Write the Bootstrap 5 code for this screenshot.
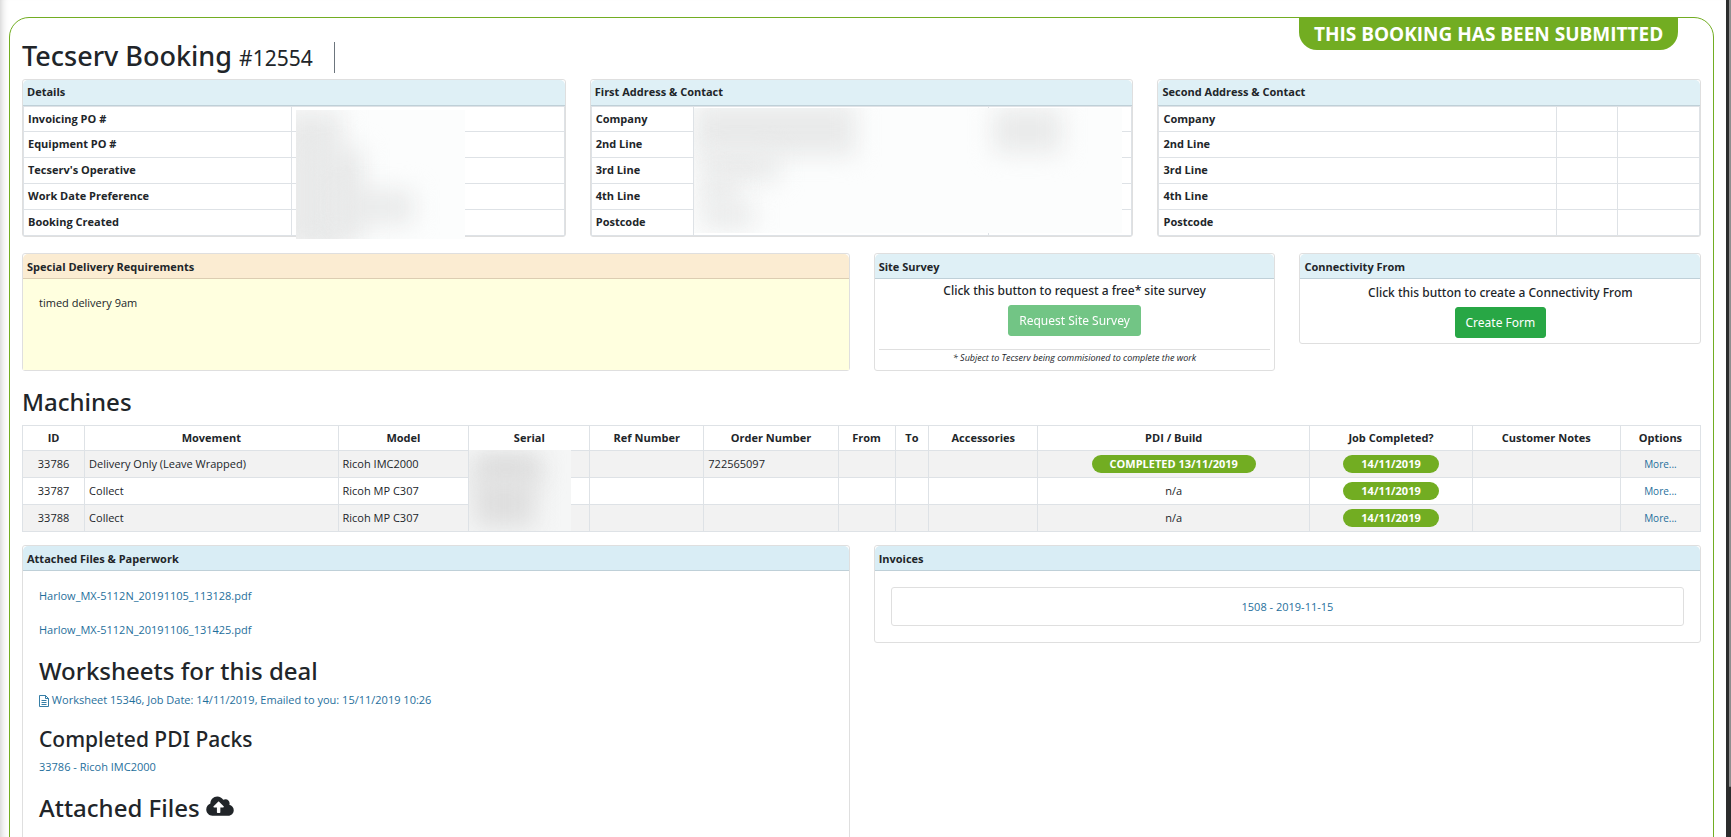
<!DOCTYPE html>
<html lang="en">
<head>
<meta charset="utf-8">
<meta name="viewport" content="width=device-width, initial-scale=1">
<title>Tecserv Booking #12554</title>
<link rel="stylesheet" href="https://cdn.jsdelivr.net/npm/bootstrap@5.3.0/dist/css/bootstrap.min.css">
<style>
  html { overflow: hidden; }
  body { font-family: "Open Sans", "Noto Sans", sans-serif; font-size: 11px; line-height: 17px; color: #212529; height: 100vh; overflow: hidden; box-shadow: inset 8px 0 8px -8px #bbb; }
  a { color: #1f6f9c; text-decoration: none; }
  .page-area { height: 100vh; min-width: 0; overflow: hidden; padding: 17px 12px 0 9px; }
  .booking-frame { border: 1px solid #72ad22; border-radius: 20px 20px 0 0; min-height: 120vh; padding: 0 12px; }
  .side-rail { width: 5px; background: #2b2c2c; }
  .side-thumb { width: 2px; height: 94vh; background: #8e8e8e; border-radius: 0 0 2px 2px; }
  .status-tab { background: #72ad22; color: #fff; font-size: 19px; font-weight: 700; line-height: 32px; padding: 0 15px; border-radius: 0 0 18px 18px; margin-right: 23px; }
  .title-row { height: 61px; }
  h1, h2, h3, .ask, .btn { font-family: "Noto Sans", "Open Sans", sans-serif; }
  h1 { font-size: 27px; line-height: 34px; font-weight: 500; margin: 21px 0 0; }
  h1 small { font-size: 21px; font-weight: 400; }
  .title-rule { width: 1px; height: 31px; background: #6c757d; margin: 24px 0 0 21px; }
  h2 { font-size: 24px; line-height: 30px; font-weight: 500; margin: 0; }
  h3 { font-size: 21px; line-height: 27px; font-weight: 500; margin: 0; }
  .card { border-color: #dfdfdf; border-radius: 3px; }
  .card-header { background: #dff0f6; border-color: #bfd0d8; font-size: 11px; font-weight: 700; line-height: 17px; padding: 4px 4px 3px; border-radius: 2px 2px 0 0; }
  .addresses .card-header { padding: 3px 4px 5px; }
  .lower { margin-top: 13px; }
  .lower .card-header { background: #d9edf5; }
  .table { font-size: 11px; margin: 0; color: #212529; border-color: #dee2e6; --bs-table-striped-bg: #f2f2f2; }
  .table > :not(caption) > * > * { padding: 4px; line-height: 17px; }
  .table > thead > tr > th { padding: 3px 4px 4px; }
  .info-table { border: 1px solid #dee2e6; table-layout: fixed; }
  .table.info-table > tbody > tr > * { padding: 3px 4px 5px; }
  .table.info-table > tbody > tr:first-child > * { padding-bottom: 4px; }
  .info-table th { font-weight: 700; }
  .notes { background: #ffffdf; padding: 15px 16px; }
  .notes-card .card-header { background: #fbecd2; border-color: #dccdb2; }
  .ask { font-size: 12px; line-height: 20px; font-weight: 500; margin-bottom: 4px; }
  .survey-body { padding: 2px 4px 4px; }
  .form-body { padding: 4px 4px 5px; }
  .btn { font-size: 12px; line-height: 21px; padding: 4px 10px; border-radius: 3px; }
  .btn-success { background: #28a745; border-color: #28a745; }
  .btn-success:disabled { background: #28a745; border-color: #28a745; opacity: .65; }
  .fine-print { font-size: 9px; line-height: 16px; font-style: italic; border-top: 1px solid #dfdfdf; margin-top: 13px; }
  .machines { table-layout: fixed; }
  .machines .pill { display: inline-block; background: #72ad22; color: #fff; font-weight: 700; line-height: 18px; border-radius: 9px; padding: 0 18px; }
  .machines tbody a { font-size: 10px; }
  .redacted { position: absolute; overflow: hidden; background: #fcfdfd; }
  .redacted i { position: absolute; background: #e9eaea; filter: blur(12px); }
  .files { padding: 16px; }
  .file-line { margin-bottom: 17px; }
  .files h2, .files h3 { padding-top: 1px; margin-bottom: 5px; }
  .files h2 svg { vertical-align: baseline; }
  .invoice-link { border: 1px solid #dfdfdf; border-radius: 3px; line-height: 17px; padding: 10px; }
</style>
</head>
<body class="d-flex">
<main class="page-area flex-grow-1">
<div class="booking-frame">
  <header class="title-row d-flex align-items-start">
    <h1>Tecserv Booking <small>#12554</small></h1>
    <div class="title-rule"></div>
    <div class="status-tab ms-auto">THIS BOOKING HAS BEEN SUBMITTED</div>
  </header>

  <div class="row addresses">
    <section class="col-4">
      <div class="card">
        <div class="card-header">Details</div>
        <table class="table table-bordered info-table">
          <colgroup><col style="width:49.6%"><col></colgroup>
          <tbody>
            <tr><th scope="row">Invoicing PO #</th><td></td></tr>
            <tr><th scope="row">Equipment PO #</th><td></td></tr>
            <tr><th scope="row">Tecserv's Operative</th><td></td></tr>
            <tr><th scope="row">Work Date Preference</th><td></td></tr>
            <tr><th scope="row">Booking Created</th><td></td></tr>
          </tbody>
        </table>
        <div class="redacted" style="left:50.4%;top:30px;width:31.2%;height:129px"><i style="left:-10%;top:0;width:38%;height:110%"></i><i style="left:10%;top:30%;width:30%;height:70%"></i><i style="left:25%;top:62%;width:45%;height:26%"></i></div>
      </div>
    </section>
    <section class="col-4">
      <div class="card">
        <div class="card-header">First Address &amp; Contact</div>
        <table class="table table-bordered info-table">
          <colgroup><col style="width:19%"><col style="width:54.4%"><col></colgroup>
          <tbody>
            <tr><th scope="row">Company</th><td></td><td></td></tr>
            <tr><th scope="row">2nd Line</th><td></td><td></td></tr>
            <tr><th scope="row">3rd Line</th><td></td><td></td></tr>
            <tr><th scope="row">4th Line</th><td></td><td></td></tr>
            <tr><th scope="row">Postcode</th><td></td><td></td></tr>
          </tbody>
        </table>
        <div class="redacted" style="left:19%;top:28px;width:79%;height:125px"><i style="left:0;top:-4%;width:38%;height:42%"></i><i style="left:2%;top:34%;width:18%;height:24%"></i><i style="left:2%;top:54%;width:8%;height:24%"></i><i style="left:2%;top:76%;width:12%;height:20%"></i><i style="left:70%;top:0;width:16%;height:36%"></i></div>
      </div>
    </section>
    <section class="col-4">
      <div class="card">
        <div class="card-header">Second Address &amp; Contact</div>
        <table class="table table-bordered info-table">
          <colgroup><col><col style="width:11.3%"><col style="width:15.2%"></colgroup>
          <tbody>
            <tr><th scope="row">Company</th><td></td><td></td></tr>
            <tr><th scope="row">2nd Line</th><td></td><td></td></tr>
            <tr><th scope="row">3rd Line</th><td></td><td></td></tr>
            <tr><th scope="row">4th Line</th><td></td><td></td></tr>
            <tr><th scope="row">Postcode</th><td></td><td></td></tr>
          </tbody>
        </table>
      </div>
    </section>
  </div>

  <div class="row mt-3">
    <section class="col-6 d-flex">
      <div class="card notes-card w-100">
        <div class="card-header">Special Delivery Requirements</div>
        <div class="notes flex-grow-1">timed delivery 9am</div>
      </div>
    </section>
    <section class="col-3">
      <div class="card text-center">
        <div class="card-header text-start">Site Survey</div>
        <div class="survey-body">
          <div class="ask">Click this button to request a free* site survey</div>
          <button type="button" class="btn btn-success" disabled>Request Site Survey</button>
          <div class="fine-print">* Subject to Tecserv being commisioned to complete the work</div>
        </div>
      </div>
    </section>
    <section class="col-3">
      <div class="card text-center">
        <div class="card-header text-start">Connectivity From</div>
        <div class="form-body">
          <div class="ask">Click this button to create a Connectivity From</div>
          <button type="button" class="btn btn-success">Create Form</button>
        </div>
      </div>
    </section>
  </div>

  <h2 class="mt-3 mb-2">Machines</h2>
  <div class="position-relative">
    <table class="table table-bordered table-striped machines">
      <colgroup><col style="width:3.7%"><col style="width:15.1%"><col style="width:7.8%"><col style="width:7.2%"><col style="width:6.8%"><col style="width:8%"><col style="width:3.4%"><col style="width:2%"><col style="width:6.5%"><col style="width:16.2%"><col style="width:9.7%"><col style="width:8.8%"><col></colgroup>
      <thead>
        <tr class="text-center"><th>ID</th><th>Movement</th><th>Model</th><th>Serial</th><th>Ref Number</th><th>Order Number</th><th>From</th><th>To</th><th>Accessories</th><th>PDI / Build</th><th>Job Completed?</th><th>Customer Notes</th><th>Options</th></tr>
      </thead>
      <tbody>
        <tr><td class="text-center">33786</td><td>Delivery Only (Leave Wrapped)</td><td>Ricoh IMC2000</td><td></td><td></td><td>722565097</td><td></td><td></td><td></td><td class="text-center"><span class="pill">COMPLETED 13/11/2019</span></td><td class="text-center"><span class="pill">14/11/2019</span></td><td></td><td class="text-center"><a href="#">More...</a></td></tr>
        <tr><td class="text-center">33787</td><td>Collect</td><td>Ricoh MP C307</td><td></td><td></td><td></td><td></td><td></td><td></td><td class="text-center">n/a</td><td class="text-center"><span class="pill">14/11/2019</span></td><td></td><td class="text-center"><a href="#">More...</a></td></tr>
        <tr><td class="text-center">33788</td><td>Collect</td><td>Ricoh MP C307</td><td></td><td></td><td></td><td></td><td></td><td></td><td class="text-center">n/a</td><td class="text-center"><span class="pill">14/11/2019</span></td><td></td><td class="text-center"><a href="#">More...</a></td></tr>
      </tbody>
    </table>
    <div class="redacted" style="left:26.6%;top:25px;width:6.1%;height:81px;background:#f5f6f6"><i style="left:5%;top:5%;width:66%;height:36%;background:#dadada"></i><i style="left:5%;top:35%;width:60%;height:60%;background:#dedede"></i></div>
  </div>

  <div class="row lower">
    <section class="col-6">
      <div class="card">
        <div class="card-header">Attached Files &amp; Paperwork</div>
        <div class="files">
          <div class="file-line"><a href="#">Harlow_MX-5112N_20191105_113128.pdf</a></div>
          <div class="file-line"><a href="#">Harlow_MX-5112N_20191106_131425.pdf</a></div>
          <h2>Worksheets for this deal</h2>
          <div class="file-line"><a href="#"><svg width="10" height="12" viewBox="0 0 10 12" fill="none" stroke="currentColor" stroke-width="0.9" aria-hidden="true"><path d="M0.500 0.500h6l3 3v8h-9zM6.500 0.500v3h3M2.500 5.500h5M2.500 7.500h5M2.500 9.500h5"/></svg> Worksheet 15346, Job Date: 14/11/2019, Emailed to you: 15/11/2019 10:26</a></div>
          <h3>Completed PDI Packs</h3>
          <div class="file-line"><a href="#">33786 - Ricoh IMC2000</a></div>
          <h2>Attached Files <svg width="28" height="22" viewBox="0 0 640 512" fill="currentColor" aria-hidden="true"><path d="M537.600 226.600c4.100-10.700 6.400-22.400 6.400-34.600 0-53-43-96-96-96-19.700 0-38.100 6-53.300 16.200C367 64.200 315.300 32 256 32c-88.400 0-160 71.600-160 160 0 2.700.1 5.400.2 8.100C40.200 219.800 0 273.200 0 336c0 79.500 64.500 144 144 144h368c70.700 0 128-57.300 128-128 0-61.900-44-113.600-102.400-125.400zM393.400 288H328v112c0 8.800-7.200 16-16 16h-48c-8.800 0-16-7.200-16-16V288h-65.400c-14.300 0-21.400-17.200-11.300-27.300l105.400-105.400c6.200-6.200 16.400-6.200 22.600 0l105.400 105.400c10.100 10.100 2.900 27.300-11.300 27.300z"/></svg></h2>
          <div class="py-5"></div>
        </div>
      </div>
    </section>
    <section class="col-6">
      <div class="card">
        <div class="card-header">Invoices</div>
        <div class="files">
          <div class="invoice-link text-center"><a href="#">1508 - 2019-11-15</a></div>
        </div>
      </div>
    </section>
  </div>
</div>
</main>
<div class="side-rail d-flex flex-shrink-0 justify-content-end"><div class="side-thumb"></div></div>
<script src="https://cdn.jsdelivr.net/npm/bootstrap@5.3.0/dist/js/bootstrap.bundle.min.js"></script>
</body>
</html>
